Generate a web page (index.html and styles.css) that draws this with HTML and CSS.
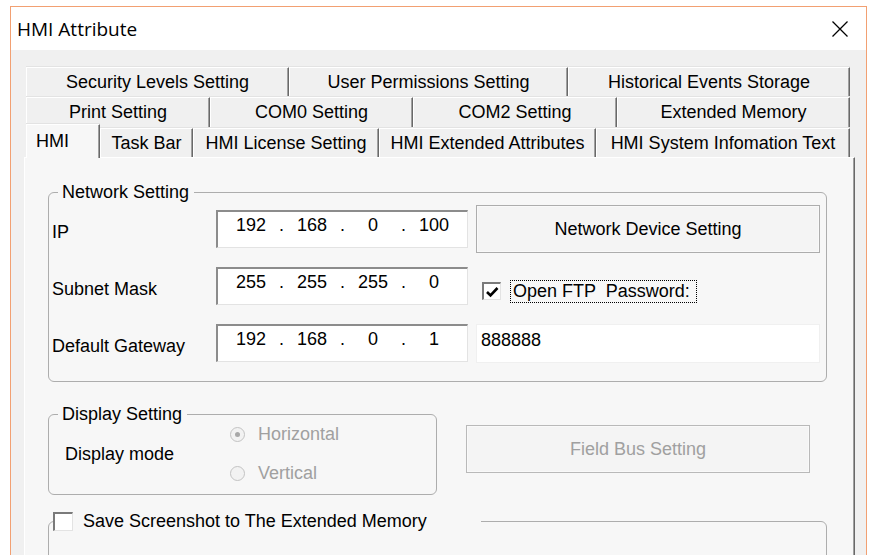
FILE: index.html
```html
<!DOCTYPE html>
<html lang="en">
<head>
<meta charset="utf-8">
<title>HMI Attribute</title>
<link rel="stylesheet" href="styles.css">
</head>
<body>
<div class="window">
  <div class="titlebar">
    <span class="title">HMI Attribute</span>
    <svg class="close" width="16" height="16" viewBox="0 0 16 16" aria-label="Close">
      <path d="M0.5 0.5 L15.5 15.5 M15.5 0.5 L0.5 15.5" stroke="#000" stroke-width="1.3" fill="none"/>
    </svg>
  </div>

  <div class="client">
    <div class="tabs">
      <div class="tabrow r1">
        <div class="tab">Security Levels Setting</div>
        <div class="tab">User Permissions Setting</div>
        <div class="tab">Historical Events Storage</div>
      </div>
      <div class="tabrow r2">
        <div class="tab">Print Setting</div>
        <div class="tab">COM0 Setting</div>
        <div class="tab">COM2 Setting</div>
        <div class="tab">Extended Memory</div>
      </div>
      <div class="tabrow r3">
        <div class="tab active">HMI</div>
        <div class="tab">Task Bar</div>
        <div class="tab">HMI License Setting</div>
        <div class="tab">HMI Extended Attributes</div>
        <div class="tab">HMI System Infomation Text</div>
      </div>
    </div>

    <div class="page">
      <fieldset class="group net">
        <legend>Network Setting</legend>
        <div class="net-grid">
          <span class="lbl">IP</span>
          <div class="ipbox">
            <span>192</span><span>.</span><span>168</span><span>.</span><span>0</span><span>.</span><span>100</span>
          </div>
          <button class="btn">Network Device Setting</button>

          <span class="lbl">Subnet Mask</span>
          <div class="ipbox">
            <span>255</span><span>.</span><span>255</span><span>.</span><span>255</span><span>.</span><span>0</span>
          </div>
          <div class="ftp">
            <span class="chk">
              <svg width="15" height="14" viewBox="0 0 15 14"><path d="M2 7 L5.5 10.5 L12.5 3" stroke="#000" stroke-width="2.6" fill="none"/></svg>
            </span>
            <span class="focus">Open FTP  Password:</span>
          </div>

          <span class="lbl">Default Gateway</span>
          <div class="ipbox">
            <span>192</span><span>.</span><span>168</span><span>.</span><span>0</span><span>.</span><span>1</span>
          </div>
          <div class="pwd">888888</div>
        </div>
      </fieldset>

      <div class="display-row">
        <fieldset class="group display">
          <legend>Display Setting</legend>
          <div class="disp-body">
            <span class="disp-lbl">Display mode</span>
            <div class="radios">
              <label class="radio"><span class="dotring on"></span>Horizontal</label>
              <label class="radio"><span class="dotring"></span>Vertical</label>
            </div>
          </div>
        </fieldset>
        <button class="btn disabled">Field Bus Setting</button>
      </div>

      <fieldset class="group shot">
        <legend class="shot-legend"><span class="chk"></span><span>Save Screenshot to The Extended Memory</span></legend>
      </fieldset>
    </div>
  </div>
</div>
</body>
</html>
```

FILE: styles.css
```css
* { box-sizing: border-box; }

html, body {
  margin: 0;
  height: 100%;
  overflow: hidden;
  background: #fff;
}

body {
  font-family: "Liberation Sans", Arial, sans-serif;
  font-size: 18px;
  color: #000;
}

/* dialog frame */
.window {
  margin: 6px 0 0 10px;
  width: 857px;
  height: 570px;
  border: 1px solid #f2a072;
  border-bottom: none;
  background: #f0f0f0;
}

.titlebar {
  height: 43px;
  background: #fff;
  display: flex;
  align-items: center;
  justify-content: space-between;
  padding: 0 18px 0 6px;
}

.title {
  font-family: "Open Sans", "Noto Sans", sans-serif;
  font-size: 19px;
}

.close { display: block; }

.client {
  padding: 17px 11px 0 13px;
}

/* multi-row tab strip */
.tabs {
  margin-left: 2px;
  width: 824px;
}

.tabrow {
  display: grid;
  height: 30px;
}

.r1 { grid-template-columns: 263px 279px 282px; }
.r2 { grid-template-columns: 184px 203px 204px 233px; }
.r3 { grid-template-columns: 74px 93px 186px 217px 254px; }

.tab {
  display: flex;
  align-items: center;
  justify-content: center;
  height: 30px;
  background: #f0f0f0;
  border-top: 1px solid #fff;
  border-left: 1px solid #fff;
  border-right: 1px solid #696969;
  box-shadow: inset -1px 0 #a0a0a0, 0 -1px #e3e3e3;
  white-space: nowrap;
}

.r3 .tab {
  margin-top: 1px;
  height: 29px;
}

.r3 .tab.active {
  position: relative;
  z-index: 1;
  margin-top: -3px;
  height: 34px;
  background: #f7f7f7;
  justify-content: flex-start;
  padding-left: 9px;
}

/* tab page */
.page {
  height: 420px;
  background: #f7f7f7;
  border-top: 1px solid #fff;
  border-left: 1px solid #fff;
  border-right: 1px solid #696969;
  box-shadow: inset -1px 0 #a0a0a0;
  padding-left: 23px;
  overflow: hidden;
}

/* group boxes */
.group {
  margin: 0;
  padding: 0;
  width: 779px;
  border: 1px solid #adadad;
  border-radius: 6px;
  min-width: 0;
}

.group legend {
  margin-left: 9px;
  padding: 0 5px 0 4px;
  height: 20px;
  line-height: 20px;
}

.net { margin-top: 24px; }

.net-grid {
  display: grid;
  grid-template-columns: 164px 252px 352px;
  grid-auto-rows: 48px;
  row-gap: 9px;
  align-items: center;
  padding: 3px 6px 14px 3px;
}

.lbl {
  line-height: 20px;
  margin-top: 6px;
}

/* IP address control */
.ipbox {
  height: 38px;
  background: #fff;
  border-style: solid;
  border-width: 2px 1px 1px 2px;
  border-color: #8c8c8c #e3e3e3 #e3e3e3 #8c8c8c;
  display: grid;
  grid-template-columns: 42px 19px 42px 19px 42px 19px 42px;
  padding: 3px 0 0 12px;
  line-height: 20px;
  text-align: center;
}

.btn {
  font: inherit;
  color: #000;
  height: 48px;
  width: 344px;
  background: #f4f4f4;
  border: 1px solid #adadad;
  box-shadow: inset 0 0 0 1px #f9f9f9;
  padding: 0;
}

.net-grid .btn { justify-self: end; }

.btn.disabled {
  color: #a0a0a0;
  border-color: #b9b9b9;
}

/* checkbox */
.chk {
  display: inline-flex;
  align-items: center;
  justify-content: center;
  width: 19px;
  height: 18px;
  background: #fff;
  border-style: solid;
  border-width: 2px 1px 1px 2px;
  border-color: #7a7a7a #e3e3e3 #e3e3e3 #7a7a7a;
  flex: none;
}

.chk svg { display: block; }

.ftp {
  display: flex;
  align-items: center;
  gap: 9px;
  padding-left: 14px;
  margin-top: 10px;
}

.focus {
  border: 1px dotted #000;
  padding: 0 6px 0 2px;
  line-height: 21px;
  white-space: pre;
}

.pwd {
  margin-left: 8px;
  height: 39px;
  background: #fff;
  border: 1px solid #f0f0f0;
  padding: 5px 4px;
  line-height: 20px;
}

/* display settings row */
.display-row {
  display: flex;
  align-items: flex-start;
  gap: 29px;
  margin-top: 22px;
}

.group.display { width: 389px; }

.disp-body {
  display: flex;
  align-items: center;
  padding: 0 0 11px 16px;
}

.disp-lbl {
  width: 165px;
  line-height: 20px;
}

.radios {
  display: flex;
  flex-direction: column;
  gap: 19px;
}

.radio {
  display: flex;
  align-items: center;
  line-height: 20px;
  color: #a0a0a0;
}

.dotring {
  width: 15px;
  height: 15px;
  border-radius: 50%;
  border: 1px solid #c3c3c3;
  background: #f2f2f2;
  margin: 0 13px 0 0;
  display: inline-flex;
  align-items: center;
  justify-content: center;
}

.dotring.on::after {
  content: "";
  width: 5px;
  height: 5px;
  border-radius: 50%;
  background: #a8a8a8;
}

.display-row .btn { margin-top: 21px; }

/* screenshot group */
.shot {
  margin-top: 16px;
  height: 120px;
}

.group .shot-legend {
  margin-left: 4px;
  padding: 0;
  width: 428px;
  display: flex;
  align-items: center;
  gap: 10px;
  white-space: nowrap;
}

.shot-legend .chk {
  width: 20px;
  height: 19px;
}
```
